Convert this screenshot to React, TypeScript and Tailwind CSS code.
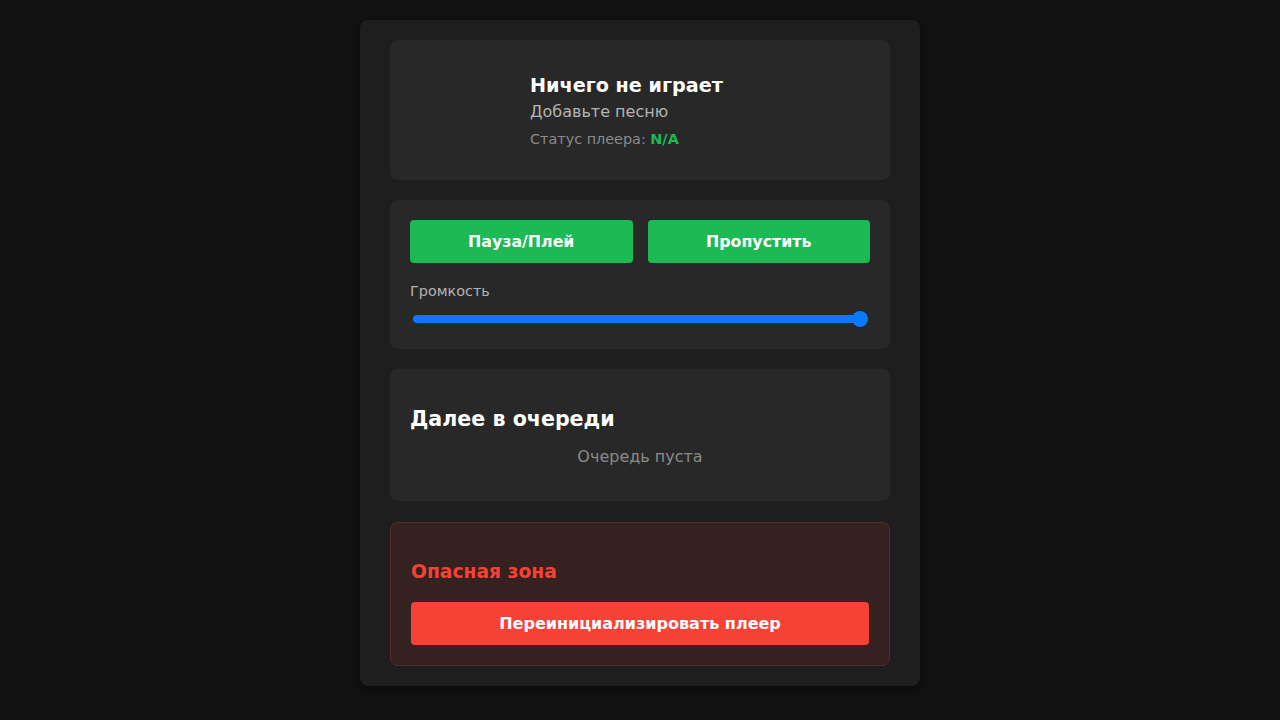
import React from "react";

export default function App() {
  return (
    <div className="min-h-screen w-full bg-[#121212] pt-5" style={{ fontFamily: '"DejaVu Sans", Verdana, sans-serif' }}>
      <div className="mx-auto w-[560px] rounded-lg bg-[#1e1e1e] px-[30px] pt-5 pb-5 shadow-[0_4px_12px_rgba(0,0,0,0.5)]">
        <div className="flex flex-col gap-5">
          {/* Now playing */}
          <div className="flex items-center gap-5 rounded-lg bg-[#282828] p-5">
            <div className="h-[100px] w-[100px] shrink-0" />
            <div className="mt-[2px] flex flex-col">
              <div className="text-[19.2px] font-bold leading-[24px] text-white">Ничего не играет</div>
              <div className="mt-[3px] text-[16px] leading-[22px] text-[#b3b3b3]">Добавьте песню</div>
              <div className="mt-[6px] text-[14.4px] leading-[20px] text-[#8a8a8a]">
                Статус плеера: <span className="font-bold text-[#1db954]">N/A</span>
              </div>
            </div>
          </div>

          {/* Controls */}
          <div className="rounded-lg bg-[#282828] px-5 pt-5 pb-[22px]">
            <div className="grid grid-cols-2 gap-[15px]">
              <button className="h-[43px] rounded bg-[#1db954] text-[15.8px] font-bold text-white">Пауза/Плей</button>
              <button className="h-[43px] rounded bg-[#1db954] text-[15.8px] font-bold text-white">Пропустить</button>
            </div>
            <div className="mt-[18px] text-[14.4px] leading-[20px] text-[#b3b3b3]">Громкость</div>
            <div className="relative mt-[10px] h-4 w-full">
              <div className="absolute left-[3px] right-[3px] top-[4px] h-2 rounded-full bg-[#0a78ff]" />
              <div className="absolute right-[2px] top-0 h-4 w-4 rounded-full bg-[#0a78ff]" />
            </div>
          </div>

          {/* Queue */}
          <div className="rounded-lg bg-[#282828] px-5 pt-5 pb-[32px]">
            <div className="mt-[18px] text-[20.6px] font-bold leading-[24px] text-white">Далее в очереди</div>
            <div className="mt-[14px] text-center text-[16px] leading-[24px] text-[#8a8a8a]">Очередь пуста</div>
          </div>

          {/* Danger zone */}
          <div className="mt-[1px] rounded-lg border border-[#582a28] bg-[#352120] p-5">
            <div className="mt-[18px] text-[18.72px] font-bold leading-[22px] text-[#f44336]">Опасная зона</div>
            <button className="mt-[19px] h-[43px] w-full rounded bg-[#f44336] text-[16px] font-bold text-white">
              Переинициализировать плеер
            </button>
          </div>
        </div>
      </div>
    </div>
  );
}
